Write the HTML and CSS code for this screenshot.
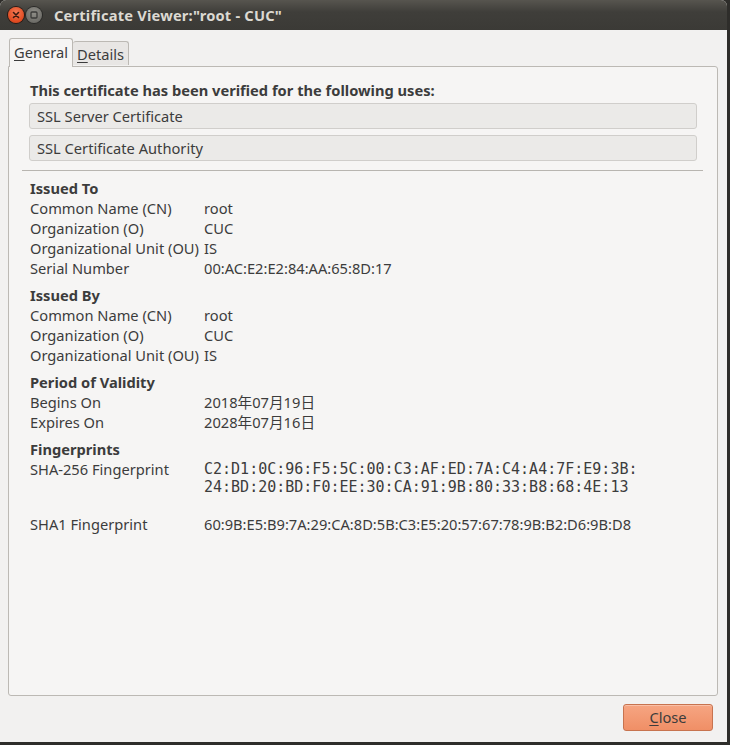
FILE: index.html
```html
<!DOCTYPE html>
<html>
<head>
<meta charset="utf-8">
<link rel="stylesheet" href="styles.css">
</head>
<body>
<div class="window">
  <div class="titlebar">
    <div class="wbtns">
      <span class="wbtn close-btn">
        <svg width="16" height="16" viewBox="0 0 16 16"><path d="M5.5 5.5 L10.5 10.5 M10.5 5.5 L5.5 10.5" stroke="#3a1a10" stroke-width="1.6" stroke-linecap="round"/></svg>
      </span>
      <span class="wbtn min-btn">
        <svg width="16" height="16" viewBox="0 0 16 16"><rect x="5" y="5" width="6" height="6" rx="1" fill="none" stroke="#3a3a38" stroke-width="1.3"/></svg>
      </span>
    </div>
    <div class="title">Certificate Viewer:"root - CUC"</div>
  </div>
  <div class="content">
    <div class="tabs">
      <div class="tab active"><u>G</u>eneral</div>
      <div class="tab"><u>D</u>etails</div>
    </div>
    <div class="panel">
      <div class="verified">
        <div class="heading">This certificate has been verified for the following uses:</div>
        <div class="usebox">SSL Server Certificate</div>
        <div class="usebox">SSL Certificate Authority</div>
      </div>
      <div class="sep"></div>
      <div class="section">
        <div class="sec-title">Issued To</div>
        <div class="grid">
          <div>Common Name (CN)</div><div>root</div>
          <div>Organization (O)</div><div>CUC</div>
          <div>Organizational Unit (OU)</div><div>IS</div>
          <div>Serial Number</div><div>00:AC:E2:E2:84:AA:65:8D:17</div>
        </div>
      </div>
      <div class="section">
        <div class="sec-title">Issued By</div>
        <div class="grid">
          <div>Common Name (CN)</div><div>root</div>
          <div>Organization (O)</div><div>CUC</div>
          <div>Organizational Unit (OU)</div><div>IS</div>
        </div>
      </div>
      <div class="section">
        <div class="sec-title">Period of Validity</div>
        <div class="grid">
          <div>Begins On</div><div>2018年07月19日</div>
          <div>Expires On</div><div>2028年07月16日</div>
        </div>
      </div>
      <div class="section fps">
        <div class="sec-title">Fingerprints</div>
        <div class="grid fp">
          <div>SHA-256 Fingerprint</div><div class="mono">C2:D1:0C:96:F5:5C:00:C3:AF:ED:7A:C4:A4:7F:E9:3B:<br>24:BD:20:BD:F0:EE:30:CA:91:9B:80:33:B8:68:4E:13</div>
          <div class="sha1">SHA1 Fingerprint</div><div class="sha1">60:9B:E5:B9:7A:29:CA:8D:5B:C3:E5:20:57:67:78:9B:B2:D6:9B:D8</div>
        </div>
      </div>
    </div>
    <div class="actions">
      <button class="btn"><u>C</u>lose</button>
    </div>
  </div>
</div>
</body>
</html>
```
FILE: styles.css
```css
html, body {
  margin: 0;
  padding: 0;
}
body {
  width: 730px;
  height: 745px;
  background: #2e2d2a;
  font-family: "Noto Sans", "Noto Sans CJK SC", sans-serif;
  font-size: 14.67px;
  color: #3c3c3c;
  overflow: hidden;
}
.window {
  width: 727px;
  height: 742px;
  background: #f2f1f0;
  border-radius: 6px 6px 0 0;
  display: flex;
  flex-direction: column;
  overflow: hidden;
}
.titlebar {
  height: 30px;
  flex: none;
  background: linear-gradient(#57554f, #3f3e3a 40%, #3b3a36);
  display: flex;
  align-items: center;
  padding-left: 8px;
  box-sizing: border-box;
}
.wbtns {
  display: flex;
  gap: 2px;
}
.wbtn {
  width: 16px;
  height: 16px;
  border-radius: 50%;
  display: block;
}
.wbtn svg { display: block; }
.close-btn {
  background: radial-gradient(circle at 50% 35%, #f47a55, #e0491f 70%, #b8391a);
  box-shadow: 0 0 0 1px #2a1a14;
}
.min-btn {
  background: radial-gradient(circle at 50% 35%, #8f8e88, #6f6e69 70%, #5a5955);
  box-shadow: 0 0 0 1px #2a2a28;
}
.title {
  margin-left: 12px;
  font-weight: bold;
  font-size: 14.67px;
  color: #dcd9d2;
  letter-spacing: 0.2px;
}
.content {
  flex: 1;
  display: flex;
  flex-direction: column;
  padding: 8px 9px 11px 8px;
  min-height: 0;
}
.tabs {
  display: flex;
  align-items: flex-end;
  height: 28px;
  margin-left: 1px;
  position: relative;
  z-index: 1;
}
.tab {
  height: 24px;
  padding: 0 4px;
  border: 1px solid #bcb9b4;
  border-bottom: none;
  border-radius: 3px 3px 0 0;
  background: #e8e6e4;
  display: flex;
  align-items: center;
  box-sizing: border-box;
  margin-bottom: 1px;
}
.tab.active {
  height: 29px;
  background: #f6f5f4;
  margin-bottom: -1px;
  padding-bottom: 2px;
}
.tab + .tab { border-left: none; }
.tab u { text-decoration-thickness: 1px; text-underline-offset: 2px; }
.panel {
  flex: 1;
  border: 1px solid #bcb9b4;
  border-radius: 0 3px 3px 3px;
  background: #f6f5f4;
  padding: 13px 20px 0 20px;
  min-height: 0;
}
.heading {
  font-weight: bold;
  line-height: 20px;
  margin-bottom: 3px;
  margin-left: 1px;
}
.usebox {
  height: 26px;
  box-sizing: border-box;
  border: 1px solid #d0cecb;
  border-radius: 3px;
  background: #ebeae8;
  display: flex;
  align-items: center;
  padding-left: 7px;
  margin-bottom: 6px;
}
.usebox:last-child {
  margin-bottom: 0;
}
.sep {
  height: 1px;
  background: #b8b5b0;
  margin: 9px -6px 7px -7px;
}
.section {
  margin-left: 1px;
  margin-bottom: 7px;
}
.fps {
  margin-top: 7px;
}
.sec-title {
  font-weight: bold;
  line-height: 20px;
}
.grid {
  display: grid;
  grid-template-columns: 174px 1fr;
  line-height: 20px;
}
.mono {
  font-family: "DejaVu Sans Mono", monospace;
  font-size: 15px;
  line-height: 18px;
  padding-top: 1px;
}
.sha1 {
  margin-top: 18px;
}
.actions {
  display: flex;
  justify-content: flex-end;
  padding-top: 8px;
  padding-right: 5px;
}
.btn {
  width: 90px;
  height: 27px;
  border: 1px solid #c7734f;
  border-radius: 3px;
  background: linear-gradient(#f6a582, #f08f66);
  font-family: "Noto Sans", sans-serif;
  font-size: 14.67px;
  color: #3c3c3c;
  padding: 0 0 1px 0;
  box-shadow: inset 0 1px 0 rgba(255,255,255,0.3);
}
.btn u { text-underline-offset: 2px; }
```
